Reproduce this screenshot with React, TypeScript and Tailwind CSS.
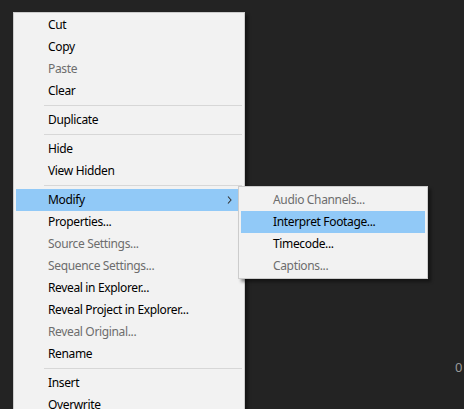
import { Fragment } from "react";

type Entry = { label?: string; disabled?: boolean; sep?: boolean; active?: boolean; sub?: boolean };

const mainItems: Entry[] = [
  { label: "Cut" },
  { label: "Copy" },
  { label: "Paste", disabled: true },
  { label: "Clear" },
  { sep: true },
  { label: "Duplicate" },
  { sep: true },
  { label: "Hide" },
  { label: "View Hidden" },
  { sep: true },
  { label: "Modify", active: true, sub: true },
  { label: "Properties..." },
  { label: "Source Settings...", disabled: true },
  { label: "Sequence Settings...", disabled: true },
  { label: "Reveal in Explorer..." },
  { label: "Reveal Project in Explorer..." },
  { label: "Reveal Original...", disabled: true },
  { label: "Rename" },
  { sep: true },
  { label: "Insert" },
  { label: "Overwrite" },
];

const subItems: Entry[] = [
  { label: "Audio Channels...", disabled: true },
  { label: "Interpret Footage...", active: true },
  { label: "Timecode..." },
  { label: "Captions...", disabled: true },
];

const MenuRows = ({ items }: { items: Entry[] }) => (
  <>
    {items.map((it, i) => (
      <Fragment key={i}>
        {it.sep ? (
          <div className="h-[7px] flex items-center pl-[28px]">
            <div className="h-px w-full bg-[#d7d7d7]" />
          </div>
        ) : (
          <div
            className={`h-[22px] flex items-center justify-between pl-[32px] pr-[10px] ${
              it.active ? "bg-[#91c9f7]" : ""
            } ${it.disabled ? "text-[#6d6d6d]" : "text-black"}`}
          >
            <span>{it.label}</span>
            {it.sub && (
              <svg width="5" height="8" viewBox="0 0 5 8" fill="none">
                <path d="M1 0.5 L4 4 L1 7.5" stroke="#333333" strokeWidth="1.1" />
              </svg>
            )}
          </div>
        )}
      </Fragment>
    ))}
  </>
);

export default function App() {
  return (
    <div
      className="relative w-[464px] h-[409px] overflow-hidden bg-[#232323] pl-[13px] pt-[12px] text-[12px] tracking-[-0.35px]"
      style={{ fontFamily: '"Noto Sans", "Open Sans", sans-serif' }}
    >
      <div className="w-[232px] border border-[#cccccc] bg-[#f2f2f2] px-[2px] pt-[1px] shadow-[3px_3px_3px_rgba(0,0,0,0.4)]">
        <MenuRows items={mainItems} />
      </div>

      <div className="absolute left-[238px] top-[186px] w-[190px] border border-[#cccccc] bg-[#f2f2f2] px-[2px] pt-[2px] pb-[1px] shadow-[3px_3px_3px_rgba(0,0,0,0.4)]">
        <MenuRows items={subItems} />
      </div>

      <span className="absolute left-[455px] top-[358px] text-[13px] tracking-normal text-[#9a9a9a]">0</span>
    </div>
  );
}
